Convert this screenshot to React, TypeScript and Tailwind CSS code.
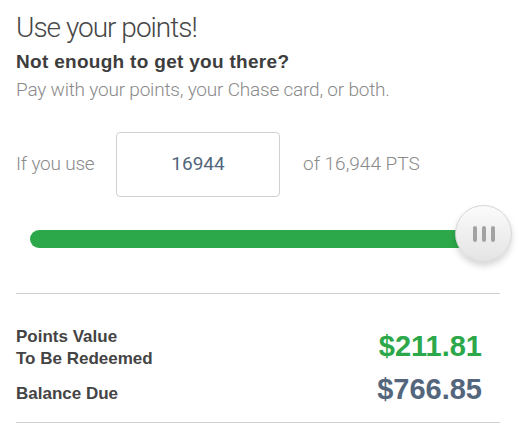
import React from "react";

export default function App() {
  return (
    <div className="w-[527px] h-[439px] bg-white overflow-hidden">
      <div className="pl-4 pr-[27px] pt-[11px]">
        <h1 className="text-[28px] leading-[34px] tracking-[-1px] font-light text-[#474747] font-['Roboto',sans-serif]">
          Use your points!
        </h1>
        <p className="mt-[6px] text-[19px] leading-[22px] tracking-[0.3px] font-bold text-[#3d3d3d] font-['Liberation_Sans',Arial,sans-serif]">
          Not enough to get you there?
        </p>
        <p className="mt-[5px] text-[19px] leading-[24px] tracking-[-0.2px] font-light text-[#8a8a8a] font-['Roboto',sans-serif]">
          Pay with your points, your Chase card, or both.
        </p>
        <div className="mt-[30px] flex items-center h-[65px]">
          <span className="w-[100px] text-[19px] tracking-[-0.2px] font-light text-[#8a8a8a] font-['Roboto',sans-serif]">
            If you use
          </span>
          <div className="w-[164px] h-[65px] border border-[#d0d0d0] rounded-[4px] flex items-center justify-center text-[19px] text-[#53667c] font-['Roboto',sans-serif]">
            16944
          </div>
          <span className="ml-[23px] text-[19px] font-light text-[#8a8a8a] font-['Roboto',sans-serif]">
            of 16,944 PTS
          </span>
        </div>
        <div className="relative mt-[8px] h-[57px]">
          <div className="absolute left-[14px] right-[30px] top-[25px] h-[18px] rounded-l-full bg-[#2ca84a]" />
          <div className="absolute left-[439px] top-0 w-[57px] h-[57px] rounded-full border border-[#d6d6d6] bg-gradient-to-b from-[#fbfbfb] to-[#e4e4e4] shadow-[0_4px_6px_rgba(0,0,0,0.16)] flex items-center justify-center gap-[5px]">
            <span className="w-[4px] h-[16px] rounded-full bg-[#a3a3a3]" />
            <span className="w-[4px] h-[16px] rounded-full bg-[#a3a3a3]" />
            <span className="w-[4px] h-[16px] rounded-full bg-[#a3a3a3]" />
          </div>
        </div>
        <div className="mt-[31px] h-px bg-[#cfcfcf]" />
        <div className="flex justify-between pr-[18px] pt-[32px] font-['Liberation_Sans',Arial,sans-serif]">
          <div className="flex flex-col text-[17px] font-bold text-[#444] leading-[22px]">
            <span>Points Value</span>
            <span>To Be Redeemed</span>
            <span className="mt-[13px]">Balance Due</span>
          </div>
          <div className="flex flex-col items-end font-bold text-[29px] leading-[36px]">
            <span className="mt-[2px] text-[#2ca84a]">$211.81</span>
            <span className="mt-[7px] text-[#53667c]">$766.85</span>
          </div>
        </div>
        <div className="mt-[15px] h-px bg-[#cfcfcf]" />
      </div>
    </div>
  );
}
